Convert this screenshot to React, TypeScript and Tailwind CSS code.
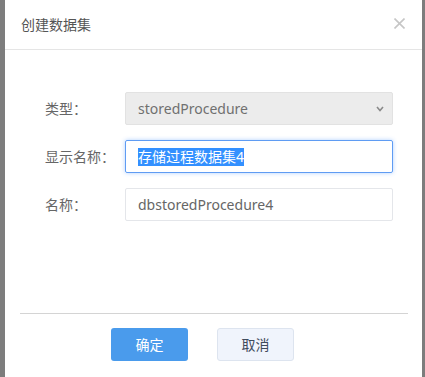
import React from 'react';

const font = { fontFamily: '"Noto Sans", "Noto Sans CJK SC", sans-serif' };

const Row: React.FC<{ label: string; children: React.ReactNode }> = ({ label, children }) => (
  <div className="flex items-center h-[33px]">
    <div className="w-[80px] text-[14px] text-[#666666]">{label}</div>
    {children}
  </div>
);

const App: React.FC = () => {
  return (
    <div className="flex h-[377px] w-[425px] bg-[#7d7d7d] pl-[5px] pr-[3px]" style={font}>
      <div className="flex-1 bg-white flex flex-col">
        {/* Header */}
        <div className="flex items-center justify-between h-[50px] border-b border-[#e5e5e5] pl-[16px] pr-[17px]">
          <span className="text-[14px] text-[#555555]">创建数据集</span>
          <svg width="11" height="11" viewBox="0 0 11 11" className="mb-[2px]">
            <path d="M0.5 0.5 L10.5 10.5 M10.5 0.5 L0.5 10.5" stroke="#c6c6c6" strokeWidth="1.6" />
          </svg>
        </div>

        {/* Form */}
        <div className="flex flex-col gap-[15px] pt-[42px] pl-[40px]">
          <Row label="类型：">
            <div className="w-[268px] h-[33px] flex items-center justify-between rounded-[2px] border border-[#e2e2e2] bg-[#ececec] pl-[12px] pr-[8px]">
              <span className="text-[14px] text-[#707070]">storedProcedure</span>
              <svg width="8" height="6" viewBox="0 0 8 6">
                <path d="M1 1 L4 4.5 L7 1" stroke="#8a8a8a" strokeWidth="1.6" fill="none" />
              </svg>
            </div>
          </Row>
          <Row label="显示名称：">
            <div className="w-[268px] h-[33px] flex items-center rounded-[2px] border border-[#5f9cf3] shadow-[0_0_4px_rgba(80,150,255,0.45)] pl-[12px]">
              <span className="text-[14px] leading-[18px] text-white bg-[#3390ff]">存储过程数据集4</span>
            </div>
          </Row>
          <Row label="名称：">
            <div className="w-[268px] h-[33px] flex items-center rounded-[2px] border border-[#e4e6ea] pl-[12px]">
              <span className="text-[14px] text-[#666666]">dbstoredProcedure4</span>
            </div>
          </Row>
        </div>

        {/* Footer */}
        <div className="mt-[92px] ml-[15px] mr-[14px] border-t border-[#d4d4d4]" />
        <div className="flex gap-[29px] pl-[106px] pt-[14px]">
          <button className="w-[77px] h-[33px] rounded-[3px] bg-[#4a9bec] text-white text-[14px]">确定</button>
          <button className="w-[77px] h-[33px] rounded-[3px] bg-[#f0f4fc] border border-[#dde4ef] text-[#3f4b5c] text-[14px]">取消</button>
        </div>
      </div>
    </div>
  );
};

export default App;
